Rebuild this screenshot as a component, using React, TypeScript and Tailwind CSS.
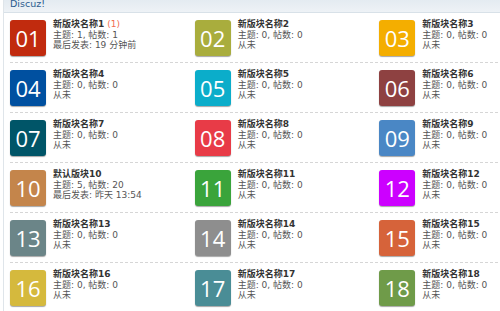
import React from "react";

type Forum = {
  n: string;
  color: string;
  name: string;
  today?: string;
  topics: number;
  posts: number;
  last: string;
};

const forums: Forum[] = [
  { n: "01", color: "#c12b0e", name: "新版块名称1", today: "(1)", topics: 1, posts: 1, last: "最后发表: 19 分钟前" },
  { n: "02", color: "#a9ad3d", name: "新版块名称2", topics: 0, posts: 0, last: "从未" },
  { n: "03", color: "#f4ae00", name: "新版块名称3", topics: 0, posts: 0, last: "从未" },
  { n: "04", color: "#0050a0", name: "新版块名称4", topics: 0, posts: 0, last: "从未" },
  { n: "05", color: "#0badca", name: "新版块名称5", topics: 0, posts: 0, last: "从未" },
  { n: "06", color: "#8e4141", name: "新版块名称6", topics: 0, posts: 0, last: "从未" },
  { n: "07", color: "#005568", name: "新版块名称7", topics: 0, posts: 0, last: "从未" },
  { n: "08", color: "#e83b47", name: "新版块名称8", topics: 0, posts: 0, last: "从未" },
  { n: "09", color: "#4a87c5", name: "新版块名称9", topics: 0, posts: 0, last: "从未" },
  { n: "10", color: "#c4854b", name: "默认版块10", topics: 5, posts: 20, last: "最后发表: 昨天 13:54" },
  { n: "11", color: "#3aa43b", name: "新版块名称11", topics: 0, posts: 0, last: "从未" },
  { n: "12", color: "#cc00ff", name: "新版块名称12", topics: 0, posts: 0, last: "从未" },
  { n: "13", color: "#6b8588", name: "新版块名称13", topics: 0, posts: 0, last: "从未" },
  { n: "14", color: "#8e8e8e", name: "新版块名称14", topics: 0, posts: 0, last: "从未" },
  { n: "15", color: "#d6633a", name: "新版块名称15", topics: 0, posts: 0, last: "从未" },
  { n: "16", color: "#d5b93d", name: "新版块名称16", topics: 0, posts: 0, last: "从未" },
  { n: "17", color: "#4a8d96", name: "新版块名称17", topics: 0, posts: 0, last: "从未" },
  { n: "18", color: "#6f9b49", name: "新版块名称18", topics: 0, posts: 0, last: "从未" },
];

function Cell({ f }: { f: Forum }) {
  return (
    <div className="flex items-start w-[184.67px] shrink-0">
      <div
        className="w-[36px] h-[36px] rounded-[3px] flex items-center justify-center text-white shadow-[0_1px_1px_rgba(0,0,0,0.35)] shrink-0"
        style={{ backgroundColor: f.color }}
      >
        <span className="font-['Open_Sans',sans-serif] font-normal text-[22px] leading-none -mt-[1px]">
          {f.n}
        </span>
      </div>
      <div className="ml-[7px] -mt-[1px] text-[9px] leading-[10.5px] font-['DejaVu_Sans','Noto_Sans_CJK_SC',sans-serif] text-[#555]">
        <div className="font-bold text-[#333]">
          {f.name}
          {f.today && <span className="font-normal text-[#f26c4f]"> {f.today}</span>}
        </div>
        <div>
          主题: {f.topics}, 帖数: {f.posts}
        </div>
        <div>{f.last}</div>
      </div>
    </div>
  );
}

export default function App() {
  const rows: Forum[][] = [];
  for (let i = 0; i < forums.length; i += 3) rows.push(forums.slice(i, i + 3));
  return (
    <div className="w-[500px] h-[311px] overflow-hidden bg-white">
      <div className="ml-[3px] border-l border-[#dfe5ea] h-full w-[600px]">
        <div className="h-[13px] bg-gradient-to-b from-[#e4ebf1] to-[#eef2f6] border-b border-[#d8e1e8] overflow-hidden">
          <div className="pl-[6px] -mt-[3px] text-[9.5px] leading-[14px] text-[#2a5b8e] font-['DejaVu_Sans',sans-serif]">
            Discuz!
          </div>
        </div>
        <div className="pl-[6px]">
          {rows.map((r, i) => (
            <div
              key={i}
              className="flex pt-[7px] pb-[6px] border-b border-dashed border-[#d6d6d6]"
            >
              {r.map((f) => (
                <Cell key={f.n} f={f} />
              ))}
            </div>
          ))}
        </div>
      </div>
    </div>
  );
}
